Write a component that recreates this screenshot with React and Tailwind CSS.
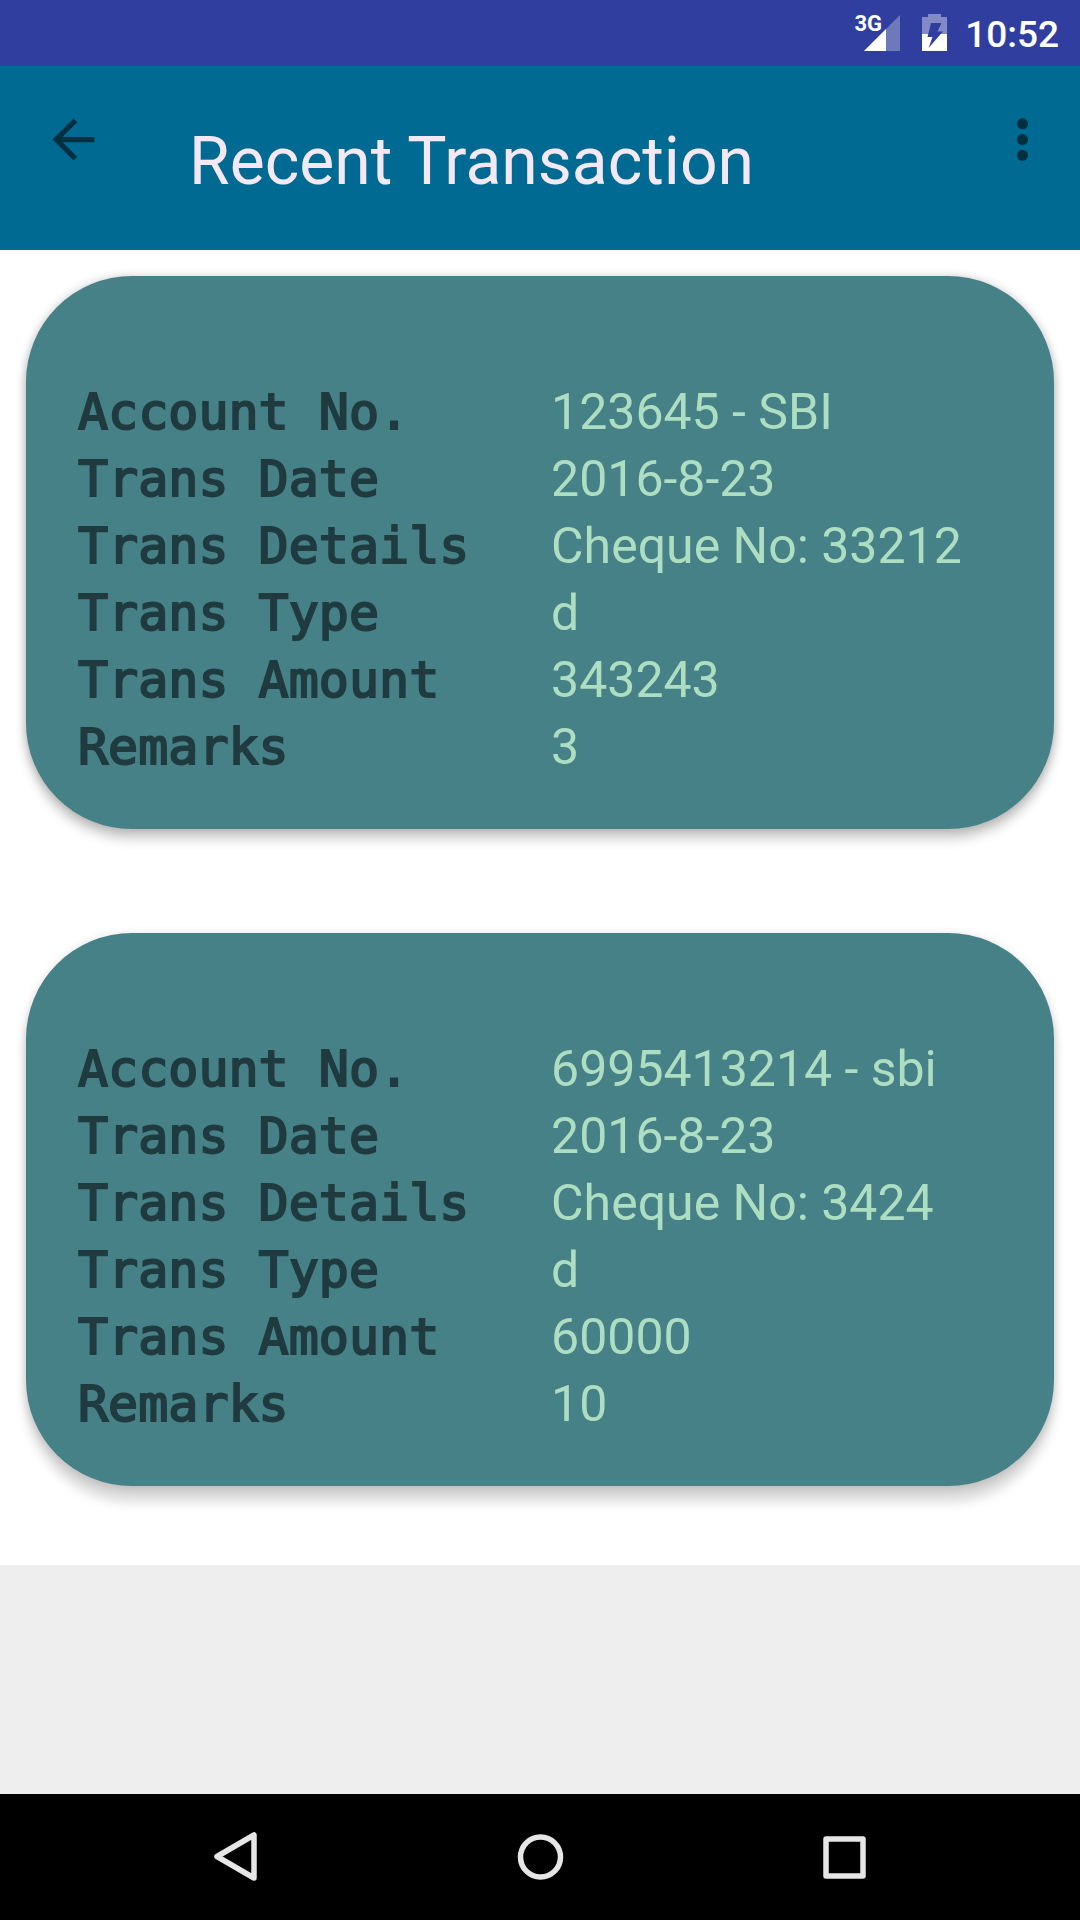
const transactions = [
  {
    id: 1,
    rows: [
      ["Account No.", "123645 - SBI"],
      ["Trans Date", "2016-8-23"],
      ["Trans Details", "Cheque No: 33212"],
      ["Trans Type", "d"],
      ["Trans Amount", "343243"],
      ["Remarks", "3"],
    ],
    shadow: "shadow-[0_10px_12px_rgba(0,0,0,0.2),0_0_10px_rgba(0,0,0,0.2)]",
  },
  {
    id: 2,
    rows: [
      ["Account No.", "6995413214 - sbi"],
      ["Trans Date", "2016-8-23"],
      ["Trans Details", "Cheque No: 3424"],
      ["Trans Type", "d"],
      ["Trans Amount", "60000"],
      ["Remarks", "10"],
    ],
    shadow: "shadow-[0_16px_12px_rgba(0,0,0,0.15),0_2px_10px_rgba(0,0,0,0.16)]",
  },
];

function StatusBar() {
  return (
    <div className="flex h-[66px] items-center justify-end bg-[#303f9f] pr-[21px] text-white">
      <div className="flex h-10 items-start">
        <span className="-mr-5 text-[22px] leading-[22px] font-bold">3G</span>
        <svg className="h-10 w-10" viewBox="0 0 40 40" aria-hidden="true">
          <path d="M38 2v36H2z" fill="#fff" fillOpacity="0.3" />
          <path d="M24 16v22H2z" fill="#fff" />
        </svg>
      </div>
      <svg className="ml-5 h-10 w-[25px]" viewBox="0 0 25 40" aria-hidden="true">
        <path d="M6 1h13v3h6v17H0V4h6z" fill="#fff" fillOpacity="0.4" />
        <path d="M0 21h25v17H0z" fill="#fff" />
        <path d="M9 10h10.500l-4 8.500H21L6.500 35l4-11H5.500z" fill="#303f9f" />
      </svg>
      <time className="mt-1 ml-[18px] text-[37px] leading-[44px] font-medium">10:52</time>
    </div>
  );
}

function AppBar() {
  return (
    <header className="flex min-h-[184px] items-start bg-[#006a92] px-[26px]">
      <button type="button" aria-label="Back" className="flex h-[147px] items-center pr-[84px] pl-4">
        <svg className="size-[63px]" viewBox="0 0 24 24" fill="#00303f" aria-hidden="true">
          <path d="M20 11H7.830l5.590-5.590L12 4l-8 8 8 8 1.410-1.410L7.830 13H20v-2z" />
        </svg>
      </button>
      <h1 className="grow pt-14 text-[66px] leading-[80px] font-normal text-[#f3e8f4]">
        Recent Transaction
      </h1>
      <button type="button" aria-label="More options" className="flex h-[147px] items-center">
        <svg className="size-[63px]" viewBox="0 0 24 24" fill="#00303f" aria-hidden="true">
          <circle cx="12" cy="6" r="2.100" />
          <circle cx="12" cy="12" r="2.100" />
          <circle cx="12" cy="18" r="2.100" />
        </svg>
      </button>
    </header>
  );
}

function TransactionCard({ rows, shadow }) {
  return (
    <article className={`rounded-[106px] bg-[#478188] px-[52px] pt-[103px] pb-12 ${shadow}`}>
      <dl>
        {rows.map(([label, value]) => (
          <div
            key={label}
            className="grid h-[67px] grid-cols-[512fr_488fr] items-baseline text-[50px] leading-[67px]"
          >
            <dt className="font-['DejaVu_Sans_Mono',monospace] text-[#203b40] [-webkit-text-stroke:2px_#203b40]">
              {label}
            </dt>
            <dd className="text-[#aedec2]">{value}</dd>
          </div>
        ))}
      </dl>
    </article>
  );
}

function NavButton({ label, children }) {
  return (
    <button type="button" aria-label={label} className="flex flex-1 items-center justify-center">
      <svg
        className="size-[60px]"
        viewBox="0 0 60 60"
        fill="none"
        stroke="#e6e6e6"
        strokeWidth="5.500"
        strokeLinejoin="round"
        aria-hidden="true"
      >
        {children}
      </svg>
    </button>
  );
}

export default function App() {
  return (
    <div className="flex min-h-screen flex-col bg-[#eeeeee] font-[Roboto,sans-serif]">
      <StatusBar />
      <AppBar />
      <main className="grow">
        <div className="flex flex-col gap-[104px] bg-white px-[26px] pt-[26px] pb-[79px]">
          {transactions.map((t) => (
            <TransactionCard key={t.id} rows={t.rows} shadow={t.shadow} />
          ))}
        </div>
      </main>
      <nav className="flex h-[126px] bg-black px-[84px]">
        <NavButton label="Back">
          <path d="M48 8v43L11 29.500z" />
        </NavButton>
        <NavButton label="Home">
          <circle cx="30.500" cy="30" r="20" />
        </NavButton>
        <NavButton label="Recent apps">
          <rect x="12" y="12" width="37" height="37" />
        </NavButton>
      </nav>
    </div>
  );
}
